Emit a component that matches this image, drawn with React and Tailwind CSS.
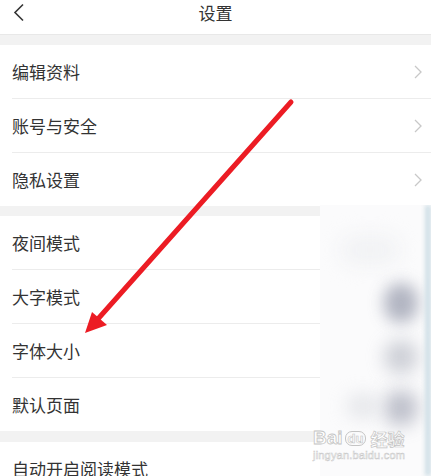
import React from "react";

const Chevron = () => (
  <svg width="10" height="16" viewBox="0 0 10 16" className="shrink-0">
    <path d="M2 2 L8 8 L2 14" fill="none" stroke="#c8c8c8" strokeWidth="1.3" />
  </svg>
);

const Row = ({ label, chevron, last }) => (
  <div className="pl-3 bg-white">
    <div
      className={
        last
          ? "h-[53px] flex items-center justify-between pr-[8px]"
          : "h-[54px] flex items-center justify-between pr-[8px] border-b border-[#ececec]"
      }
    >
      <span className="text-[17px] text-[#333] leading-none">{label}</span>
      {chevron && <Chevron />}
    </div>
  </div>
);

const Gap = ({ h }) => <div className={h + " bg-[#f2f2f2]"} />;

const Group = ({ items, chevron }) => (
  <div className="flex flex-col shrink-0">
    {items.map((t, i) => (
      <Row key={t} label={t} chevron={chevron} last={i === items.length - 1} />
    ))}
  </div>
);

export default function App() {
  return (
    <div
      className="relative w-[431px] h-[476px] overflow-hidden bg-white flex flex-col"
      style={{ fontFamily: '"Noto Sans CJK SC", "Noto Sans", sans-serif' }}
    >
      {/* header */}
      <div className="h-[35px] shrink-0 grid grid-cols-[40px_1fr_40px] items-start border-b border-[#e8e8e8]">
        <div className="pl-[12px] pt-[3px]">
          <svg width="14" height="19" viewBox="0 0 14 19">
            <path d="M11 1.5 L3 9.5 L11 17.5" fill="none" stroke="#333" strokeWidth="1.6" />
          </svg>
        </div>
        <span className="text-[17px] text-[#333] leading-none mt-[4px] text-center">设置</span>
        <div />
      </div>
      <Gap h="h-[10px] shrink-0" />
      <Group items={["编辑资料", "账号与安全", "隐私设置"]} chevron />
      <Gap h="h-[10px] shrink-0" />
      <Group items={["夜间模式", "大字模式", "字体大小", "默认页面"]} />
      <Gap h="h-[11px] shrink-0" />
      <Group items={["自动开启阅读模式"]} />

      {/* blurred overlay on right */}
      <div className="absolute left-[320px] top-[205px] w-[111px] h-[271px] bg-[#fbfbfc] overflow-hidden">
        <div className="absolute left-[64px] top-[78px] w-[34px] h-[40px] rounded-full bg-[#9fa3b3] blur-[8px] opacity-80" />
        <div className="absolute left-[64px] top-[135px] w-[34px] h-[34px] rounded-full bg-[#b9bcc6] blur-[9px] opacity-70" />
        <div className="absolute left-[64px] top-[185px] w-[34px] h-[36px] rounded-full bg-[#a9acba] blur-[9px] opacity-75" />
        <div className="absolute left-[26px] top-[188px] w-[34px] h-[26px] rounded-full bg-[#d9dbe0] blur-[9px] opacity-60" />
        <div className="absolute left-[20px] top-[30px] w-[60px] h-[30px] rounded-full bg-[#f1f2f4] blur-[10px]" />
        <div className="absolute right-0 top-0 w-[6px] h-full bg-[#cfdfe6] blur-[2px]" />
      </div>

      {/* watermark */}
      <div className="absolute left-[313px] top-[428px] flex flex-col items-start">
        <div className="flex items-end gap-[2px] leading-none">
          <span
            className="text-[19px] font-bold text-white"
            style={{ fontFamily: '"Liberation Sans", sans-serif', WebkitTextStroke: "0.8px #c4c4c4" }}
          >
            Bai
          </span>
          <span
            className="text-[13px] font-bold text-white border-[1.5px] border-[#c4c4c4] rounded-[7px] px-[2px] mb-[1px]"
            style={{ fontFamily: '"Liberation Sans", sans-serif', WebkitTextStroke: "0.6px #c4c4c4" }}
          >
            du
          </span>
          <span
            className="text-[17px] font-bold text-white ml-[2px]"
            style={{ WebkitTextStroke: "0.7px #c4c4c4" }}
          >
            经验
          </span>
        </div>
        <div
          className="text-[11px] text-white leading-none mt-[3px] tracking-[0.2px]"
          style={{ fontFamily: '"Liberation Sans", sans-serif', WebkitTextStroke: "0.5px #c8c8c8" }}
        >
          jingyan.baidu.com
        </div>
      </div>

      {/* red arrow */}
      <svg className="absolute left-0 top-0" width="431" height="476" viewBox="0 0 431 476">
        <line x1="291" y1="102" x2="97" y2="320" stroke="#ec1c24" strokeWidth="5" strokeLinecap="round" />
        <polygon points="85,333 92,312 107,325" fill="#ec1c24" />
      </svg>
    </div>
  );
}
